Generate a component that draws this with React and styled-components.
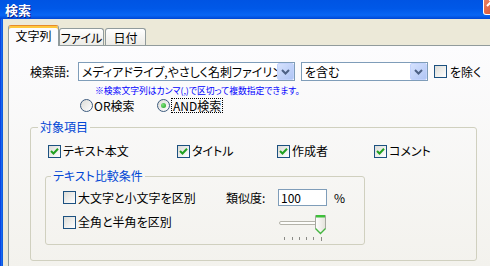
import React from 'react';
import styled, { createGlobalStyle } from 'styled-components';

const GlobalStyle = createGlobalStyle`
  html, body {
    margin: 0;
    padding: 0;
    overflow: hidden;
    background: #ece9d8;
  }
  body {
    font-family: "Noto Sans CJK JP", "Noto Sans", sans-serif;
    font-size: 12px;
    color: #000;
    font-feature-settings: "palt";
  }
`;

const Window = styled.div`
  width: 503px;
  height: 266px;
  display: flex;
  flex-direction: column;
  overflow: hidden;
`;

const TitleBar = styled.div`
  height: 19px;
  flex: none;
  display: flex;
  justify-content: space-between;
  align-items: flex-start;
  background: linear-gradient(#0054e3 0%, #0058e8 45%, #0866f4 80%, #0047d4 100%);
`;

const Title = styled.span`
  margin: 3px 0 0 5px;
  color: #fff;
  font-weight: bold;
  font-size: 13px;
  line-height: 14px;
  text-shadow: 1px 1px #0a1883;
`;

const CloseButton = styled.div`
  width: 20px;
  height: 15px;
  box-sizing: border-box;
  border: 1px solid #fff;
  border-top: none;
  border-radius: 0 0 3px 3px;
  background: linear-gradient(135deg, #e7805f, #d6472a);
`;

const Body = styled.div`
  flex: 1;
  display: flex;
`;

const WindowEdge = styled.div`
  width: 3px;
  flex: none;
  background: linear-gradient(to right, #0831d9, #166aee, #0855dd);
`;

const Content = styled.div`
  flex: 1;
  display: flex;
  flex-direction: column;
  padding: 6px 0 0 5px;
`;

const TabStrip = styled.div`
  height: 20px;
  display: flex;
  align-items: flex-end;
`;

const Tab = styled.div`
  position: relative;
  z-index: 1;
  box-sizing: border-box;
  width: ${p => p.$w}px;
  margin-right: ${p => (p.$gap ? 1 : 0)}px;
  border: 1px solid #919b9c;
  border-bottom: none;
  border-radius: 3px 3px 0 0;
  text-align: center;
  ${p => p.$active ? `
    height: 21px;
    margin-bottom: -1px;
    border-top: 1px solid #e68b2c;
    box-shadow: inset 0 2px #ffc73c;
    background: #fcfcfe;
    padding-top: 2px;
    line-height: 16px;
  ` : `
    height: 17px;
    line-height: 17px;
    background: linear-gradient(#ffffff, #ecebe6);
  `}
`;

const Panel = styled.div`
  flex: 1;
  border-top: 1px solid #919b9c;
  border-left: 1px solid #919b9c;
  background: linear-gradient(#fcfcfe, #f3f2ed);
  padding: 16px 0 0 21px;
`;

const SearchRow = styled.div`
  display: flex;
  align-items: center;
  height: 19px;
`;

const FieldLabel = styled.span`
  width: ${p => p.$w}px;
  flex: none;
  line-height: 14px;
`;

const Combo = styled.div`
  box-sizing: border-box;
  width: ${p => p.$w}px;
  height: 19px;
  margin-left: ${p => p.$ml || 0}px;
  border: 1px solid #7f9db9;
  background: #fff;
  display: flex;
  align-items: center;
  padding-left: 3px;
`;

const ComboText = styled.span`
  flex: 1;
  overflow: hidden;
  white-space: nowrap;
  line-height: 17px;
`;

const ComboButton = styled.div`
  width: 17px;
  height: 17px;
  box-sizing: border-box;
  flex: none;
  border: 1px solid #c3d3fd;
  border-radius: 2px;
  background: linear-gradient(135deg, #d6e2fd, #b0c5f5);
  display: flex;
  align-items: center;
  justify-content: center;
`;

const CheckLabel = styled.label`
  display: inline-flex;
  align-items: center;
  gap: ${p => p.$gap ?? 2}px;
  width: ${p => (p.$w ? `${p.$w}px` : 'auto')};
  margin-left: ${p => p.$ml || 0}px;
  margin-top: ${p => p.$mt || 0}px;
  flex: none;
  line-height: 14px;
  white-space: nowrap;
`;

const Box = styled.span`
  width: 13px;
  height: 13px;
  box-sizing: border-box;
  flex: none;
  border: 1px solid #1c5180;
  background: linear-gradient(135deg, #dcdcd7, #ffffff);
  display: flex;
  align-items: center;
  justify-content: center;
`;

const Note = styled.div`
  margin: 3px 0 0 65px;
  color: #0000ff;
  font-size: 8.8px;
  line-height: 13px;
  white-space: nowrap;
`;

const RadioRow = styled.div`
  display: flex;
  align-items: center;
  height: 13px;
  margin: 2px 0 0 50px;
`;

const RadioItem = styled.label`
  display: inline-flex;
  align-items: center;
  gap: ${p => p.$gap}px;
  width: ${p => (p.$w ? `${p.$w}px` : 'auto')};
  line-height: 13px;
`;

const Circle = styled.span`
  width: 13px;
  height: 13px;
  box-sizing: border-box;
  flex: none;
  border-radius: 50%;
  border: 1px solid #3c5a7d;
  background: linear-gradient(135deg, #dcdcd7, #ffffff);
  display: flex;
  align-items: center;
  justify-content: center;
`;

const Dot = styled.span`
  width: 5px;
  height: 5px;
  border-radius: 50%;
  background: radial-gradient(circle at 35% 35%, #7ee27a, #21a121);
`;

const Focus = styled.span`
  outline: 1px dotted #000;
  padding: 0 1px;
`;

const GroupBox = styled.fieldset`
  margin: ${p => p.$mt}px 0 0 ${p => p.$ml || 0}px;
  padding: 0;
  min-width: 0;
  width: ${p => p.$w}px;
  box-sizing: border-box;
  border: 1px solid #d0d0bf;
  border-radius: 3px;
`;

const GroupTitle = styled.legend`
  margin-left: ${p => p.$ml}px;
  padding: 0 2px;
  color: #0046d5;
  font-size: 12px;
  line-height: 14px;
`;

const GroupBody = styled.div`
  padding: ${p => p.$pad};
`;

const CheckRow = styled.div`
  display: flex;
  align-items: center;
  height: 14px;
  padding-left: 3px;
`;

const InnerRow = styled.div`
  display: flex;
  align-items: ${p => p.$align || 'center'};
  height: ${p => p.$h}px;
  margin-top: ${p => p.$mt || 0}px;
`;

const NumberBox = styled.div`
  box-sizing: border-box;
  width: 49px;
  height: 17px;
  border: 1px solid #7f9db9;
  background: #fff;
  padding-left: 2px;
  line-height: 15px;
`;

const Unit = styled.span`
  margin-left: 7px;
  line-height: 14px;
`;

const SliderArt = styled.svg`
  flex: none;
  margin-top: 1px;
  display: block;
`;

const Chevron = () => (
  <svg width="9" height="6" viewBox="0 0 9 6">
    <path d="M1 1 L4.5 4.5 L8 1" fill="none" stroke="#4d6185" strokeWidth="2" />
  </svg>
);

const Check = ({ checked }) => (
  <Box>
    {checked && (
      <svg width="9" height="9" viewBox="0 0 9 9">
        <path d="M1 4 L3.5 6.5 L8 1.8" fill="none" stroke="#21a121" strokeWidth="2" />
      </svg>
    )}
  </Box>
);

const Slider = () => (
  <SliderArt width="49" height="28" viewBox="0 0 49 28">
    <defs>
      <linearGradient id="thumb" x1="0" y1="0" x2="1" y2="0">
        <stop offset="0" stopColor="#ffffff" />
        <stop offset="1" stopColor="#e3e2da" />
      </linearGradient>
    </defs>
    <rect x="1.5" y="7.5" width="37" height="3" rx="1.5" fill="#fdfdfb" stroke="#b4b3aa" />
    <path d="M37.5 1.5 H47.5 V14.5 L42.5 19.5 L37.5 14.5 Z" fill="url(#thumb)" stroke="#a5a69e" />
    <rect x="38" y="1" width="9" height="2.5" fill="#3ec03a" />
    <path d="M37.5 14.5 L42.5 19.5 L47.5 14.5" fill="none" stroke="#43b53f" strokeWidth="1.4" />
    {[6, 14, 21, 28, 35, 43].map(x => (
      <rect key={x} x={x} y={23} width={1} height={x === 43 ? 4 : 3} fill="#8a8a86" />
    ))}
  </SliderArt>
);

export default function App() {
  return (
    <Window>
      <GlobalStyle />
      <TitleBar>
        <Title>検索</Title>
        <CloseButton>
          <svg width="18" height="14" viewBox="0 0 18 14">
            <path d="M3 -3 L12 6 M12 -3 L3 6" stroke="#fff" strokeWidth="2" />
          </svg>
        </CloseButton>
      </TitleBar>
      <Body>
        <WindowEdge />
        <Content>
          <TabStrip>
            <Tab $active $w={51}>文字列</Tab>
            <Tab $w={45} $gap>ファイル</Tab>
            <Tab $w={41}>日付</Tab>
          </TabStrip>
          <Panel>
            <SearchRow>
              <FieldLabel $w={48}>検索語:</FieldLabel>
              <Combo $w={217}>
                <ComboText>メディアドライブ,やさしく名刺ファイリング</ComboText>
                <ComboButton><Chevron /></ComboButton>
              </Combo>
              <Combo $w={127} $ml={6}>
                <ComboText>を含む</ComboText>
                <ComboButton><Chevron /></ComboButton>
              </Combo>
              <CheckLabel $ml={6} $gap={3}>
                <Check />
                を除く
              </CheckLabel>
            </SearchRow>
            <Note>※検索文字列はカンマ(,)で区切って複数指定できます。</Note>
            <RadioRow>
              <RadioItem $w={77} $gap={1}>
                <Circle />
                OR検索
              </RadioItem>
              <RadioItem $gap={2}>
                <Circle><Dot /></Circle>
                <Focus>AND検索</Focus>
              </RadioItem>
            </RadioRow>
            <GroupBox $mt={8} $w={447}>
              <GroupTitle $ml={7}>対象項目</GroupTitle>
              <GroupBody $pad="10px 0 15px 14px">
                <CheckRow>
                  <CheckLabel $w={129}><Check checked />テキスト本文</CheckLabel>
                  <CheckLabel $w={100}><Check checked />タイトル</CheckLabel>
                  <CheckLabel $w={97}><Check checked />作成者</CheckLabel>
                  <CheckLabel><Check checked />コメント</CheckLabel>
                </CheckRow>
                <GroupBox $mt={11} $w={320}>
                  <GroupTitle $ml={5}>テキスト比較条件</GroupTitle>
                  <GroupBody $pad="5px 0 3px 17px">
                    <InnerRow $h={19}>
                      <CheckLabel $w={163}><Check />大文字と小文字を区別</CheckLabel>
                      <FieldLabel $w={52}>類似度:</FieldLabel>
                      <NumberBox>100</NumberBox>
                      <Unit>%</Unit>
                    </InnerRow>
                    <InnerRow $h={28} $mt={6} $align="flex-start">
                      <CheckLabel $w={215} $mt={2}><Check />全角と半角を区別</CheckLabel>
                      <Slider />
                    </InnerRow>
                  </GroupBody>
                </GroupBox>
              </GroupBody>
            </GroupBox>
          </Panel>
        </Content>
      </Body>
    </Window>
  );
}
